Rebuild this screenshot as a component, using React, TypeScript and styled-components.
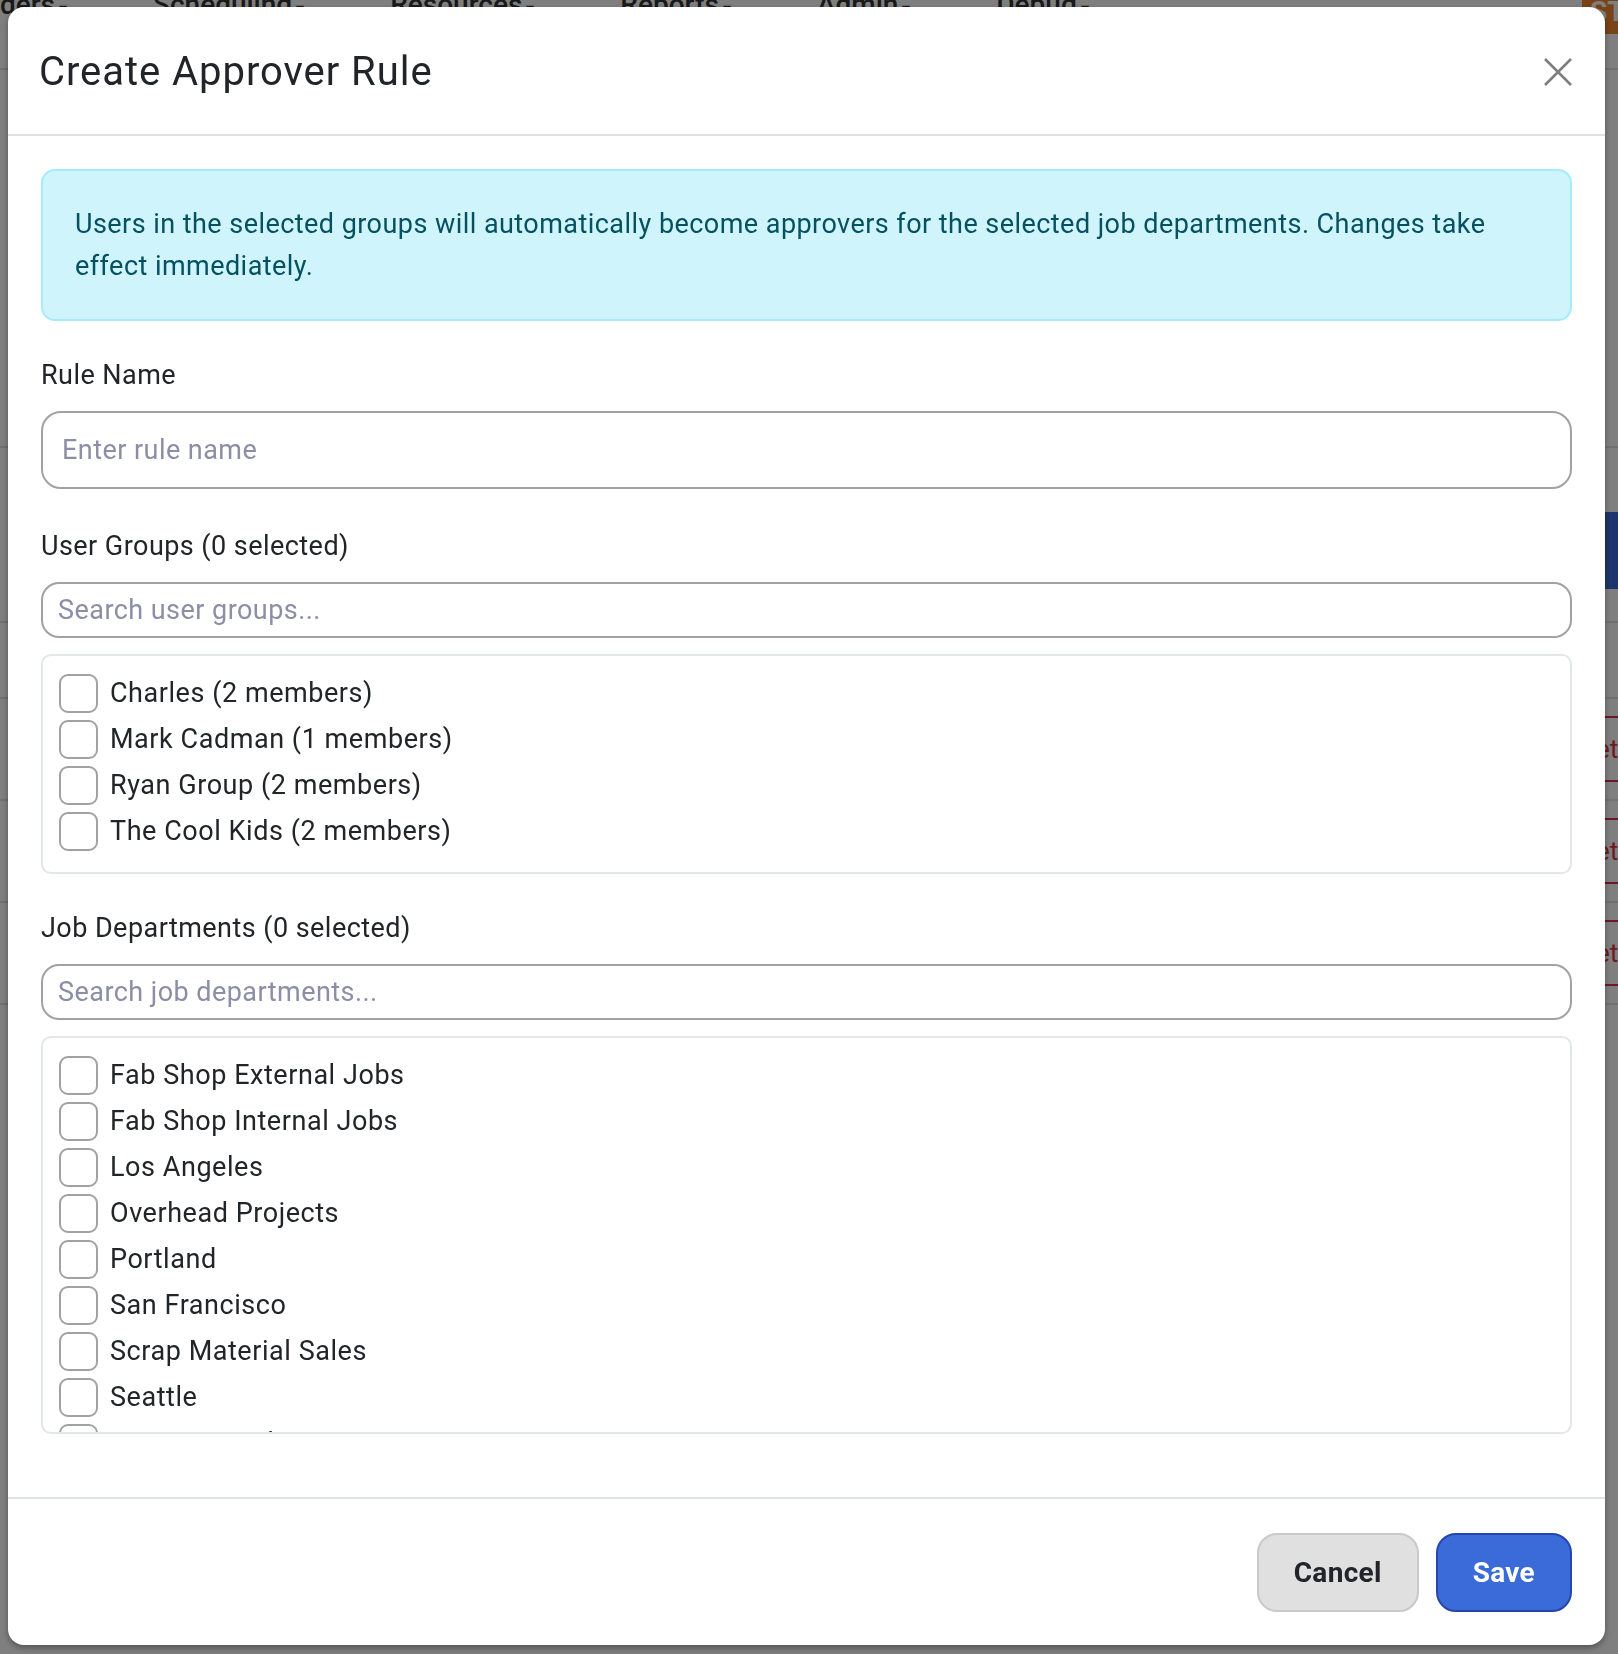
import React from 'react';
import styled, { createGlobalStyle } from 'styled-components';

const GlobalStyle = createGlobalStyle`
    html, body {
        margin: 0;
        padding: 0;
    }
    body {
        font-family: Roboto, "Liberation Sans", Arial, sans-serif;
        color: #212529;
        background: #fff;
        overflow: hidden;
    }
    * {
        box-sizing: border-box;
    }
`;

/* ---------- page behind the dialog ---------- */

const Page = styled.div`
    width: 100%;
    height: 1654px;
    overflow: hidden;
    background: #fff;
`;

const TopNav = styled.nav`
    display: flex;
    align-items: flex-start;
    height: 70px;
    border-bottom: 2px solid #dee2e6;
`;

const NavLinks = styled.div`
    display: flex;
    gap: 86px;
    margin-left: -29px;
    margin-top: -12px;
    font-size: 28px;
    font-weight: 500;
    color: #333;
`;

const NavLink = styled.span`
    white-space: nowrap;
    &::after {
        content: '  ▾';
        font-size: 16px;
    }
`;

const UserButton = styled.div`
    margin-left: auto;
    margin-right: -70px;
    width: 106px;
    height: 34px;
    padding: 0 0 0 8px;
    background: #f0882a;
    color: #fff;
    font-weight: 700;
    font-size: 28px;
    line-height: 24px;
`;

const Table = styled.div`
    margin-top: 376px;
    border-top: 2px solid #dee2e6;
`;

const TableRow = styled.div<{ $height: number; $align?: string }>`
    display: flex;
    justify-content: flex-end;
    align-items: ${p => p.$align || 'center'};
    height: ${p => p.$height}px;
    border-bottom: 2px solid #dee2e6;
`;

const AddButton = styled.div`
    width: 180px;
    height: 77px;
    margin: 0 -80px 32px 0;
    background: #3a6bd8;
    border-radius: 10px;
`;

const DeleteButton = styled.div`
    margin-right: -34px;
    height: 66px;
    padding: 0 18px;
    border: 2px solid #dc3545;
    border-radius: 10px;
    color: #dc3545;
    font-size: 26px;
    line-height: 62px;
`;

/* ---------- dialog ---------- */

const Backdrop = styled.div`
    position: fixed;
    inset: 0;
    background: rgba(0, 0, 0, 0.5);
`;

const Dialog = styled.div`
    position: fixed;
    top: 7px;
    left: 8px;
    width: 1597px;
    height: 1638px;
    display: flex;
    flex-direction: column;
    background: #fff;
    border-radius: 16px;
    box-shadow: 0 3px 6px rgba(0, 0, 0, 0.35);
    overflow: hidden;
    letter-spacing: 0.45px;
`;

const Header = styled.div`
    display: flex;
    align-items: center;
    justify-content: space-between;
    height: 129px;
    padding: 2px 32px 0 31px;
    border-bottom: 2px solid #dee2e6;
`;

const Title = styled.h5`
    margin: 0;
    font-size: 40px;
    font-weight: 400;
    letter-spacing: 0.95px;
    color: #212529;
`;

const CloseButton = styled.button`
    display: flex;
    padding: 0;
    border: 0;
    background: none;
    cursor: pointer;
`;

const Body = styled.div`
    flex: 1;
    padding: 33px;
    overflow: hidden;
`;

const Alert = styled.div`
    margin-bottom: 33px;
    padding: 32px 32px;
    background: #cff4fc;
    border: 2px solid #a6ecf8;
    border-radius: 14px;
    color: #055160;
    font-size: 27px;
    line-height: 42px;
`;

const Field = styled.div<{ $gap?: number }>`
    margin-bottom: ${p => p.$gap ?? 33}px;
`;

const Label = styled.label`
    display: block;
    margin-bottom: 15px;
    font-size: 27px;
    line-height: 42px;
    color: #212529;
`;

const TextInput = styled.input<{ $large?: boolean }>`
    display: block;
    width: 100%;
    height: ${p => (p.$large ? 78 : 56)}px;
    margin-bottom: ${p => (p.$large ? 0 : 16)}px;
    padding: 0 ${p => (p.$large ? 19 : 15)}px;
    border: 2px solid #a2a2a2;
    border-radius: ${p => (p.$large ? 20 : 18)}px;
    font-family: inherit;
    font-size: 27px;
    letter-spacing: inherit;
    color: #212529;
    outline: none;
    &::placeholder {
        color: #8b8ea6;
    }
`;

const CheckList = styled.div<{ $maxHeight?: number }>`
    max-height: ${p => (p.$maxHeight ? `${p.$maxHeight}px` : 'none')};
    padding: 14px 16px 18px;
    border: 2px solid #e3e6ea;
    border-radius: 10px;
    overflow-y: auto;
    scrollbar-width: none;
    &::-webkit-scrollbar {
        display: none;
    }
`;

const CheckRow = styled.label`
    display: flex;
    align-items: center;
    gap: 12px;
    height: 46px;
    font-size: 27px;
    letter-spacing: 0.55px;
    color: #212529;
    white-space: nowrap;
`;

const Checkbox = styled.input.attrs({ type: 'checkbox' })`
    appearance: none;
    flex: none;
    width: 39px;
    height: 39px;
    margin: 0;
    background: #fff;
    border: 2px solid #a2a2a2;
    border-radius: 9px;
`;

const Footer = styled.div`
    display: flex;
    align-items: center;
    justify-content: flex-end;
    gap: 17px;
    height: 148px;
    padding: 0 33px;
    border-top: 2px solid #dee2e6;
`;

const Button = styled.button<{ $primary?: boolean }>`
    height: 79px;
    padding: 0 35px;
    border: 2px solid ${p => (p.$primary ? '#2546ae' : '#c9c9c9')};
    border-radius: 20px;
    background: ${p => (p.$primary ? '#3a6bd8' : '#e0e0e0')};
    color: ${p => (p.$primary ? '#fff' : '#23242b')};
    font-family: inherit;
    font-size: 28px;
    font-weight: 700;
    letter-spacing: 0.3px;
    cursor: pointer;
`;

const userGroups = [
    'Charles (2 members)',
    'Mark Cadman (1 members)',
    'Ryan Group (2 members)',
    'The Cool Kids (2 members)',
];

const departments = [
    'Fab Shop External Jobs',
    'Fab Shop Internal Jobs',
    'Los Angeles',
    'Overhead Projects',
    'Portland',
    'San Francisco',
    'Scrap Material Sales',
    'Seattle',
    'Training & Education Dept',
];

function CloseIcon() {
    return (
        <svg width="30" height="30" viewBox="0 0 30 30">
            <path d="M2 2 L28 28 M28 2 L2 28" stroke="#7e7e7e" strokeWidth="2.6" fill="none" />
        </svg>
    );
}

function BackgroundPage() {
    return (
        <Page>
            <TopNav>
                <NavLinks>
                    <NavLink>Orders</NavLink>
                    <NavLink>Scheduling</NavLink>
                    <NavLink>Resources</NavLink>
                    <NavLink>Reports</NavLink>
                    <NavLink>Admin</NavLink>
                    <NavLink>Debug</NavLink>
                </NavLinks>
                <UserButton>ST</UserButton>
            </TopNav>
            <Table>
                <TableRow $height={175} $align="flex-end">
                    <AddButton />
                </TableRow>
                <TableRow $height={76} />
                <TableRow $height={102}>
                    <DeleteButton>Delete</DeleteButton>
                </TableRow>
                <TableRow $height={102}>
                    <DeleteButton>Delete</DeleteButton>
                </TableRow>
                <TableRow $height={102}>
                    <DeleteButton>Delete</DeleteButton>
                </TableRow>
            </Table>
        </Page>
    );
}

export default function App() {
    return (
        <>
            <GlobalStyle />
            <BackgroundPage />
            <Backdrop />
            <Dialog role="dialog">
                <Header>
                    <Title>Create Approver Rule</Title>
                    <CloseButton aria-label="Close">
                        <CloseIcon />
                    </CloseButton>
                </Header>
                <Body>
                    <Alert>
                        Users in the selected groups will automatically become approvers for the selected job
                        departments. Changes take effect immediately.
                    </Alert>

                    <Field $gap={36}>
                        <Label>Rule Name</Label>
                        <TextInput $large placeholder="Enter rule name" />
                    </Field>

                    <Field>
                        <Label>User Groups (0 selected)</Label>
                        <TextInput placeholder="Search user groups..." />
                        <CheckList>
                            {userGroups.map(name => (
                                <CheckRow key={name}>
                                    <Checkbox />
                                    {name}
                                </CheckRow>
                            ))}
                        </CheckList>
                    </Field>

                    <Field>
                        <Label>Job Departments (0 selected)</Label>
                        <TextInput placeholder="Search job departments..." />
                        <CheckList $maxHeight={398}>
                            {departments.map(name => (
                                <CheckRow key={name}>
                                    <Checkbox />
                                    {name}
                                </CheckRow>
                            ))}
                        </CheckList>
                    </Field>
                </Body>
                <Footer>
                    <Button>Cancel</Button>
                    <Button $primary>Save</Button>
                </Footer>
            </Dialog>
        </>
    );
}
